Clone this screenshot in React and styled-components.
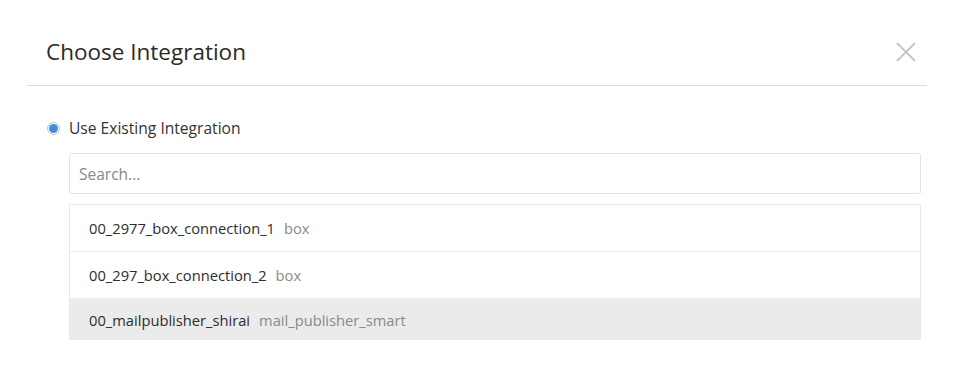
import React from 'react';
import styled, { createGlobalStyle } from 'styled-components';

const Global = createGlobalStyle`
  body {
    margin: 0;
    background: #fff;
    font-family: "Open Sans", "Noto Sans", sans-serif;
    color: #333;
  }
`;

const Modal = styled.div`
  width: 900px;
  margin: 0 29px 0 27px;
`;

const Header = styled.div`
  display: flex;
  align-items: center;
  justify-content: space-between;
  height: 86px;
  padding: 18px 10px 0 19px;
  border-bottom: 1px solid #dcdcdc;
  box-sizing: border-box;
`;

const Title = styled.h2`
  margin: 0;
  font-size: 22.5px;
  font-weight: 500;
  color: #2a2a2a;
`;

const Close = styled.button`
  display: flex;
  border: 0;
  background: none;
  padding: 0;
  cursor: pointer;
`;

const Body = styled.div`
  padding: 32px 6px 0 20px;
`;

const RadioRow = styled.label`
  display: flex;
  align-items: center;
  gap: 9px;
  font-size: 15.6px;
  color: #333;
  height: 20px;
`;

const Radio = styled.span`
  width: 13px;
  height: 13px;
  border-radius: 50%;
  border: 1px solid #bdbdbd;
  box-sizing: border-box;
  display: flex;
  align-items: center;
  justify-content: center;
  &::after {
    content: '';
    width: 9px;
    height: 9px;
    border-radius: 50%;
    background: #3d8fdc;
  }
`;

const Inner = styled.div`
  padding-left: 22px;
  margin-top: 15px;
`;

const Search = styled.input`
  display: block;
  width: 100%;
  height: 41px;
  box-sizing: border-box;
  border: 1px solid #e4e4e4;
  border-radius: 2px;
  padding: 0 9px;
  font-family: inherit;
  font-size: 15.5px;
  outline: none;
  &::placeholder {
    color: #888;
  }
`;

const List = styled.div`
  margin-top: 10px;
  border: 1px solid #e8e8e8;
  border-bottom: 0;
`;

const Row = styled.div`
  display: flex;
  align-items: center;
  gap: 9px;
  height: ${p => (p.$last ? '41px' : '46px')};
  padding: 0 19px;
  background: ${p => (p.$active ? '#ebebeb' : '#fff')};
  border-top: ${p => (p.$first ? '0' : '1px solid #ececec')};
  font-size: 14.7px;
`;

const Name = styled.span`
  color: #2d2d2d;
`;

const Kind = styled.span`
  color: #8a8a8a;
`;

const rows = [
  { name: '00_2977_box_connection_1', kind: 'box' },
  { name: '00_297_box_connection_2', kind: 'box' },
  { name: '00_mailpublisher_shirai', kind: 'mail_publisher_smart', active: true },
];

export default function App() {
  return (
    <>
      <Global />
      <Modal>
        <Header>
          <Title>Choose Integration</Title>
          <Close aria-label="close">
            <svg width="22" height="22" viewBox="0 0 22 22">
              <path d="M2 2 L20 20 M20 2 L2 20" stroke="#c4c4c4" strokeWidth="1.8" fill="none" />
            </svg>
          </Close>
        </Header>
        <Body>
          <RadioRow>
            <Radio />
            Use Existing Integration
          </RadioRow>
          <Inner>
            <Search placeholder="Search..." />
            <List>
              {rows.map((r, i) => (
                <Row key={r.name} $first={i === 0} $last={i === rows.length - 1} $active={r.active}>
                  <Name>{r.name}</Name>
                  <Kind>{r.kind}</Kind>
                </Row>
              ))}
            </List>
          </Inner>
        </Body>
      </Modal>
    </>
  );
}
